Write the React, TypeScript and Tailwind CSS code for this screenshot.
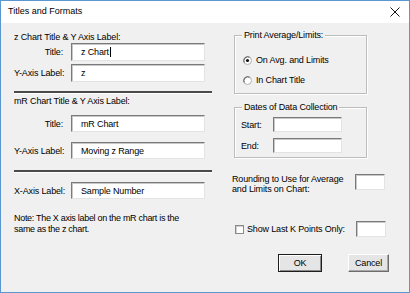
import React from "react";

const font = { fontFamily: '"Liberation Sans", Arial, sans-serif' };

const TextBox: React.FC<{ value?: string; caret?: boolean; className?: string }> = ({
  value,
  caret,
  className = "",
}) => (
  <div
    className={`flex items-center bg-white border border-t-[#7a7a7a] border-l-[#7a7a7a] border-r-[#e3e3e3] border-b-[#e3e3e3] shadow-[inset_1px_1px_0_#c8c8c8] pl-[9px] text-black ${className}`}
  >
    <span>{value}</span>
    {caret && <span className="ml-[1px] w-[1px] h-[10px] bg-black" />}
  </div>
);

const Separator = ({ className = "" }: { className?: string }) => (
  <div className={`h-[3px] border-t-2 border-[#4a4a4a] border-b border-b-white ${className}`} />
);

const FieldRow: React.FC<{
  label: string;
  value: string;
  caret?: boolean;
  height: string;
  className?: string;
}> = ({ label, value, caret, height, className = "" }) => (
  <div className={`flex items-center ${className}`}>
    <span className="w-[49px] text-right whitespace-nowrap">{label}</span>
    <TextBox value={value} caret={caret} className={`ml-[8px] w-[134px] ${height}`} />
  </div>
);

const Radio = ({ checked }: { checked?: boolean }) => (
  <svg width="9" height="9" viewBox="0 0 9 9">
    <circle cx="4.5" cy="4.5" r="4" fill="#fff" stroke="#b0b0b0" />
    <path d="M1.2 6.5 A4 4 0 0 1 6.5 1.2" fill="none" stroke="#555" strokeWidth="1" />
    {checked && <circle cx="4.5" cy="4.5" r="1.6" fill="#111" />}
  </svg>
);

const GroupBox: React.FC<{ title: string; className?: string; children: React.ReactNode }> = ({
  title,
  className = "",
  children,
}) => (
  <div
    className={`relative w-[133px] border border-[#bcbcbc] shadow-[inset_1px_1px_0_#ffffff,1px_1px_0_#ffffff] ${className}`}
  >
    <span className="absolute -top-[7px] left-[7px] bg-[#f0f0f0] px-[2px] leading-[12px] whitespace-nowrap">
      {title}
    </span>
    {children}
  </div>
);

export default function App() {
  return (
    <div
      style={font}
      className="w-[410px] h-[293px] border border-[#5a96cf] bg-[#f0f0f0] flex flex-col text-[9px] tracking-[-0.15px] text-black overflow-hidden"
    >
      {/* title bar */}
      <div className="h-[22px] bg-white flex items-center justify-between pl-[7px] pr-[9px]">
        <span className="text-[9px] tracking-[0px]">Titles and Formats</span>
        <svg width="10" height="10" viewBox="0 0 10 10">
          <path d="M0.5 0.5 L9.5 9.5 M9.5 0.5 L0.5 9.5" stroke="#111" strokeWidth="1" />
        </svg>
      </div>

      <div className="flex flex-1">
        {/* left column */}
        <div className="ml-[13px] w-[198px] flex flex-col leading-[12px]">
          <div className="mt-[8px] whitespace-nowrap">z Chart Title &amp; Y Axis Label:</div>
          <FieldRow label="Title:" value="z Chart" caret height="h-[18px]" className="mt-0" />
          <FieldRow label="Y-Axis Label:" value="z" height="h-[18px]" className="mt-[3px]" />
          <Separator className="mt-[9px]" />
          <div className="mt-[1px] whitespace-nowrap">mR Chart Title &amp; Y Axis Label:</div>
          <FieldRow label="Title:" value="mR Chart" height="h-[17px]" className="mt-[8px]" />
          <FieldRow label="Y-Axis Label:" value="Moving z Range" height="h-[17px]" className="mt-[10px]" />
          <Separator className="mt-[11px]" />
          <FieldRow label="X-Axis Label:" value="Sample Number" height="h-[17px]" className="mt-[9px]" />
          <p className="mt-[14px] leading-[10.5px] w-[180px] tracking-[-0.3px]">
            Note: The X axis label on the mR chart is the same as the z chart.
          </p>
        </div>

        {/* right column */}
        <div className="ml-[22px] w-[155px] flex flex-col leading-[12px]">
          <GroupBox title="Print Average/Limits:" className="mt-[12px] h-[59px]">
            <div className="flex flex-col pl-[8px] pt-[18px] gap-[8px]">
              <div className="flex items-center gap-[4px] h-[12px]">
                <Radio checked />
                <span>On Avg. and Limits</span>
              </div>
              <div className="flex items-center gap-[4px] h-[12px]">
                <Radio />
                <span>In Chart Title</span>
              </div>
            </div>
          </GroupBox>

          <GroupBox title="Dates of Data Collection" className="mt-[13px] h-[51px]">
            <div className="flex flex-col pl-[6px] pt-[9px] gap-[6px]">
              <div className="flex items-center">
                <span className="w-[32px]">Start:</span>
                <TextBox className="w-[69px] h-[15px]" />
              </div>
              <div className="flex items-center">
                <span className="w-[32px]">End:</span>
                <TextBox className="w-[69px] h-[15px]" />
              </div>
            </div>
          </GroupBox>

          <div className="mt-[16px] flex items-start">
            <div className="-ml-[2px] w-[123px] leading-[10px]">
              Rounding to Use for Average and Limits on Chart:
            </div>
            <TextBox className="w-[30px] h-[16px]" />
          </div>

          <div className="mt-[27px] flex items-center h-[16px]">
            <span className="ml-[1px] w-[9px] h-[9px] bg-white border border-[#8a8a8a] shadow-[inset_1px_1px_0_#cfcfcf]" />
            <span className="ml-[3px] w-[109px] whitespace-nowrap">Show Last K Points Only:</span>
            <TextBox className="w-[30px] h-[16px]" />
          </div>

          <div className="mt-[17px] flex">
            <button className="ml-[44px] w-[44px] h-[18px] bg-[#e5e5e5] border border-[#1e1e1e] shadow-[inset_1px_1px_0_#ffffff,inset_-1px_-1px_0_#8a8a8a] text-[9px]">
              OK
            </button>
            <button className="ml-[26px] w-[41px] h-[18px] bg-[#e5e5e5] border border-t-white border-l-white border-r-[#6d6d6d] border-b-[#6d6d6d] shadow-[inset_-1px_-1px_0_#a8a8a8] text-[9px]">
              Cancel
            </button>
          </div>
        </div>
      </div>
    </div>
  );
}
